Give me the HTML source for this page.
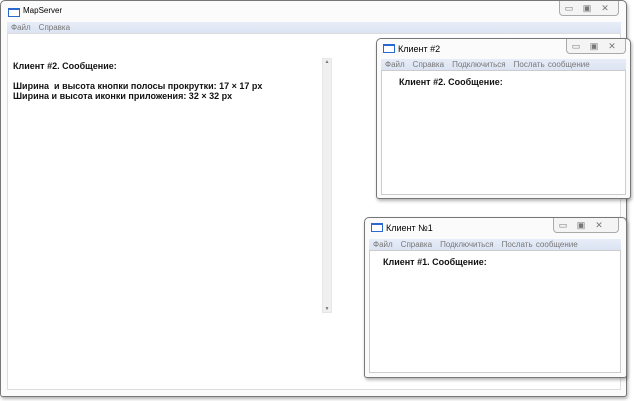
<!DOCTYPE html>
<html><head><meta charset="utf-8"><style>
*{margin:0;padding:0;box-sizing:border-box}
body{width:634px;height:401px;background:#fff;position:relative;overflow:hidden;font-family:"Liberation Sans",Arial,sans-serif}
.win{position:absolute;background:#fbfbfb;border:1px solid #777;border-radius:5px 5px 3px 3px;box-shadow:1px 2px 3px rgba(0,0,0,.3)}
.title{position:absolute;left:6px;top:4px;font-size:9px;color:#000}
.ico{position:absolute;width:12px;height:9px;border:1px solid #2a6ad0;border-top-width:2px;background:#fff}
.btns{position:absolute;top:0;height:15px;border:1px solid #aaa;border-top:none;border-radius:0 0 4px 4px;background:#f4f4f4;font-size:9px;color:#777}
.btns span{display:inline-block;text-align:center;width:18px;line-height:14px}
.menu{position:absolute;height:11px;background:linear-gradient(#e8eef8,#dbe3f2);font-size:8px;color:#777;line-height:11px;padding-left:4px;word-spacing:1px}
.menu span{margin-right:8px}
.client{position:absolute;background:#fff;border:1px solid #ccc}
.t{position:absolute;font-size:9px;font-weight:bold;color:#111;white-space:nowrap}
</style></head><body>
<div class="win" style="left:0;top:0;width:627px;height:397px">
 <div class="ico" style="left:7px;top:7px"></div>
 <div class="title" style="left:22px;top:5px;font-size:8px">MapServer</div>
 <div class="btns" style="left:558px;width:60px"><span>▭</span><span>▣</span><span>✕</span></div>
 <div class="menu" style="left:6px;top:21px;width:614px"><span>Файл</span><span>Справка</span></div>
 <div class="client" style="left:6px;top:32px;width:614px;height:357px;border-color:#ddd"></div>
 <div class="t" style="left:12px;top:60px">Клиент #2. Сообщение:</div>
 <div class="t" style="left:12px;top:80px">Ширина&nbsp; и высота кнопки полосы прокрутки: 17 × 17 px</div>
 <div class="t" style="left:12px;top:90px">Ширина и высота иконки приложения: 32 × 32 px</div>
 <div style="position:absolute;left:321px;top:57px;width:10px;height:255px;background:#f0f0f0;border:1px solid #e6e6e6;font-size:5px;color:#777;text-align:center">▲<div style="position:absolute;bottom:0;width:8px">▼</div></div>
</div>
<div class="win" style="left:376px;top:38px;width:255px;height:161px">
 <div class="ico" style="left:6px;top:5px"></div>
 <div class="title" style="left:21px;top:5px">Клиент #2</div>
 <div class="btns" style="left:189px;width:60px"><span>▭</span><span>▣</span><span>✕</span></div>
 <div class="menu" style="left:4px;top:20px;width:245px"><span>Файл</span><span>Справка</span><span>Подключиться</span><span>Послать сообщение</span></div>
 <div class="client" style="left:4px;top:31px;width:245px;height:125px"></div>
 <div class="t" style="left:22px;top:38px">Клиент #2. Сообщение:</div>
</div>
<div class="win" style="left:364px;top:217px;width:263px;height:161px">
 <div class="ico" style="left:6px;top:5px"></div>
 <div class="title" style="left:21px;top:5px">Клиент №1</div>
 <div class="btns" style="left:188px;width:66px"><span>▭</span><span>▣</span><span>✕</span></div>
 <div class="menu" style="left:4px;top:21px;width:252px"><span>Файл</span><span>Справка</span><span>Подключиться</span><span>Послать сообщение</span></div>
 <div class="client" style="left:4px;top:32px;width:252px;height:123px"></div>
 <div class="t" style="left:18px;top:39px">Клиент #1. Сообщение:</div>
</div>
</body></html>
